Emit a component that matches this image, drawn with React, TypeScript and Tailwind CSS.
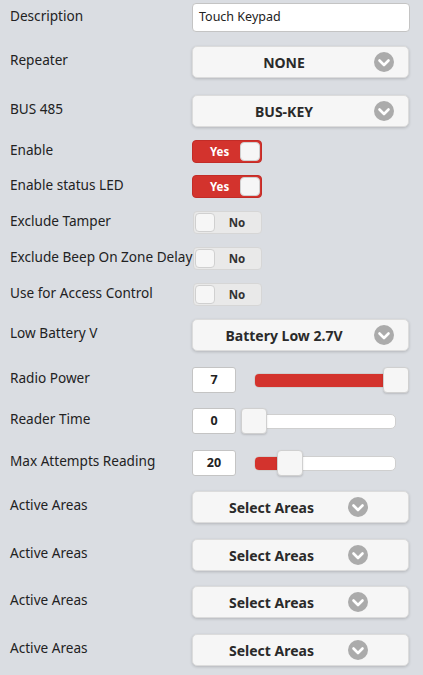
import React from 'react';

const font = { fontFamily: '"Noto Sans", "Open Sans", Arial, sans-serif' };

function Chevron() {
  return (
    <svg width="20" height="20" viewBox="0 0 20 20">
      <circle cx="10" cy="10" r="10" fill="#ababab" />
      <path d="M5.5 8.5 L10 13 L14.5 8.5" fill="none" stroke="#fff" strokeWidth="2.6" strokeLinecap="round" strokeLinejoin="round" />
    </svg>
  );
}

function Label({ text }: { text: string }) {
  return <div className="w-[182px] shrink-0 pl-[10px] text-[13.6px] text-[#222] pb-[3px] whitespace-nowrap">{text}</div>;
}

function Select({ value, narrow }: { value: string; narrow?: boolean }) {
  return (
    <div className="relative w-[217px] h-[32px] rounded-[5px] bg-[#f6f6f6] border border-[#dcdcdc] shadow-[0_1px_3px_rgba(0,0,0,0.18)] flex items-center">
      <div className={`w-full text-center text-[14px] font-bold text-[#2a2a2a] ${narrow ? 'pl-[2px] pr-[60px]' : 'pl-[12px] pr-[45px]'}`}>
        {value}
      </div>
      <div className={`absolute top-[5px] ${narrow ? 'right-[40px]' : 'right-[14px]'}`}>
        <Chevron />
      </div>
    </div>
  );
}

function Toggle({ on }: { on: boolean }) {
  if (on) {
    return (
      <div className="w-[70px] h-[23px] rounded-[4px] bg-[#d3332d] border border-[#c22c27] flex items-center justify-between pl-[17px] pr-[1px]">
        <span className="text-[11.5px] font-bold text-white">Yes</span>
        <div className="w-[20px] h-[19px] rounded-[4px] bg-[#f6f6f6] border border-[#d0d0d0]" />
      </div>
    );
  }
  return (
    <div className="w-[69px] h-[23px] rounded-[4px] bg-[#e9e9e9] border border-[#d6d6d6] flex items-center pl-[1px] ml-[1px]">
      <div className="w-[20px] h-[19px] rounded-[4px] bg-[#f6f6f6] border border-[#d0d0d0]" />
      <span className="flex-1 text-center text-[11.5px] font-bold text-[#333] pr-[2px]">No</span>
    </div>
  );
}

function Slider({ value, pct, track }: { value: string; pct: number; track: number }) {
  return (
    <div className="flex items-center">
      <div className="w-[44px] h-[26px] rounded-[3px] bg-white border border-[#c4c4c4] flex items-center justify-center text-[12.5px] font-bold text-[#222]">
        {value}
      </div>
      <div className="relative ml-[18px] h-[26px] flex items-center" style={{ width: track }}>
        <div className="w-full h-[15px] rounded-[5px] bg-white border border-[#cfcfcf] overflow-hidden">
          <div className="h-full bg-[#d3332d]" style={{ width: `${pct}%` }} />
        </div>
        <div
          className="absolute top-0 w-[26px] h-[26px] rounded-[4px] bg-[#f6f6f6] border border-[#d0d0d0] shadow-[0_1px_2px_rgba(0,0,0,0.15)]"
          style={{ left: `calc(${pct}% - 13px)` }}
        />
      </div>
    </div>
  );
}

function Row({ label, mt, h, children }: { label: string; mt: string; h: string; children: React.ReactNode }) {
  return (
    <div className={`flex items-center ${mt} ${h}`}>
      <Label text={label} />
      <div className="ml-[10px]">{children}</div>
    </div>
  );
}

export default function App() {
  return (
    <div className="w-[423px] h-[675px] bg-[#dadde2] pt-[3px]" style={font}>
      <Row label="Description" mt="mt-0" h="h-[29px]">
        <div className="w-[218px] h-[29px] rounded-[4px] bg-white border border-[#c4c4c4] flex items-center px-[6px] text-[12.5px] text-[#222]">
          Touch Keypad
        </div>
      </Row>
      <Row label="Repeater" mt="mt-[14px]" h="h-[32px]"><Select value="NONE" /></Row>
      <Row label="BUS 485" mt="mt-[17px]" h="h-[32px]"><Select value="BUS-KEY" /></Row>
      <Row label="Enable" mt="mt-[13px]" h="h-[23px]"><Toggle on /></Row>
      <Row label="Enable status LED" mt="mt-[12px]" h="h-[23px]"><Toggle on /></Row>
      <Row label="Exclude Tamper" mt="mt-[13px]" h="h-[23px]"><Toggle on={false} /></Row>
      <Row label="Exclude Beep On Zone Delay" mt="mt-[13px]" h="h-[23px]"><Toggle on={false} /></Row>
      <Row label="Use for Access Control" mt="mt-[13px]" h="h-[23px]"><Toggle on={false} /></Row>
      <Row label="Low Battery V" mt="mt-[13px]" h="h-[32px]"><Select value="Battery Low 2.7V" /></Row>
      <Row label="Radio Power" mt="mt-[16px]" h="h-[26px]"><Slider value="7" pct={100} track={142} /></Row>
      <Row label="Reader Time" mt="mt-[15px]" h="h-[26px]"><Slider value="0" pct={0} track={142} /></Row>
      <Row label="Max Attempts Reading" mt="mt-[16px]" h="h-[26px]"><Slider value="20" pct={25} track={142} /></Row>
      <Row label="Active Areas" mt="mt-[15px]" h="h-[32px]"><Select value="Select Areas" narrow /></Row>
      <Row label="Active Areas" mt="mt-[16px]" h="h-[32px]"><Select value="Select Areas" narrow /></Row>
      <Row label="Active Areas" mt="mt-[15px]" h="h-[32px]"><Select value="Select Areas" narrow /></Row>
      <Row label="Active Areas" mt="mt-[16px]" h="h-[32px]"><Select value="Select Areas" narrow /></Row>
    </div>
  );
}
